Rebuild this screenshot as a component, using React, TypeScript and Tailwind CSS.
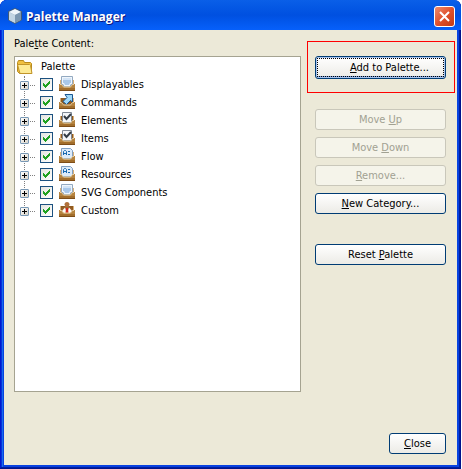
import React, { useState } from "react";

type IconKind = "tray" | "command" | "check" | "letter" | "custom";

const categories: { name: string; icon: IconKind }[] = [
  { name: "Displayables", icon: "tray" },
  { name: "Commands", icon: "command" },
  { name: "Elements", icon: "check" },
  { name: "Items", icon: "check" },
  { name: "Flow", icon: "letter" },
  { name: "Resources", icon: "letter" },
  { name: "SVG Components", icon: "tray" },
  { name: "Custom", icon: "custom" },
];

function CategoryIcon({ kind }: { kind: IconKind }) {
  return (
    <svg viewBox="0 0 16 16" className="size-4 shrink-0" aria-hidden="true">
      <path d="M1 4h14v5H1z" fill="#d8b07a" />
      <path d="M2 4h12v7H2z" fill="#8f5a20" />
      {kind === "tray" && (
        <>
          <path d="M2.500.5h11v8h-1.500l-1 2h-6l-1-2H2.500z" fill="#f0f6fc" stroke="#93a9c0" />
          <path d="M4 2h8v5h-1l-1 2H6L5 7H4z" fill="#a9c8ea" />
          <path d="M4 2h8v2H4z" fill="#d3e4f6" />
        </>
      )}
      {kind === "command" && (
        <path
          d="M6 .5h7.500V8L11.500 6.500 7.500 10.500 4 7.500l4-4z"
          fill="#9fd8f8"
          stroke="#1a5690"
        />
      )}
      {kind === "check" && (
        <>
          <path d="M3.500.5h9v10h-9z" fill="#f4f6f9" stroke="#7f8894" />
          <path d="M5 4l2.500 3L12 2" fill="none" stroke="#333c46" strokeWidth="2" />
        </>
      )}
      {kind === "letter" && (
        <>
          <path d="M2.500.5h9l2 2v8h-11z" fill="#dcebfa" stroke="#7f9fc4" />
          <path
            d="M4.500 7V3.500l1-1h1l1 1V7M4.500 5.500h3M9 3.500h2M9 6.500h2"
            fill="none"
            stroke="#1768b0"
          />
        </>
      )}
      {kind === "custom" && (
        <>
          <path d="M2 10c0-4 2-5 6-5s6 1 6 5z" fill="#9a6229" />
          <path d="M5.500 2.500a2.500 2.500 0 0 1 5 0L9.500 5h-3z" fill="#b0713a" />
          <path d="M3 9l3-3.500L8 11l2-5.500L13 9l-2 2H5z" fill="#fbfbfb" />
          <path d="M7 6h2l.5 5h-3z" fill="#d22a1c" />
        </>
      )}
      <path d="M0 8h2l2 3h8l2-3h2v7H0z" fill="#b5833f" />
      <path d="M1 8.500h1.500l2 2.500h7l2-2.500H15" fill="none" stroke="#ead2a4" />
      <path d="M0 12h16v3H0z" fill="#a26e2c" />
      <path d="M0 14.500h16" stroke="#7d4d18" />
    </svg>
  );
}

function CategoryRow({ name, icon }: { name: string; icon: IconKind }) {
  const [checked, setChecked] = useState(true);
  return (
    <li className="flex h-[18px] items-start">
      <button
        type="button"
        aria-label={`Expand ${name}`}
        className="relative mt-[5px] grid size-[9px] shrink-0 place-items-center rounded-[1px] border border-[#7898b5] bg-linear-to-br from-white to-[#d8d3c8]"
      >
        <svg viewBox="0 0 5 5" className="size-[5px]" aria-hidden="true">
          <path d="M0 2.500h5M2.500 0v5" stroke="#000" />
        </svg>
      </button>
      <span className="mt-[9px] ml-px w-[5px] border-t border-dotted border-[#808080]" />
      <label className="ml-[5px] flex items-start">
        <span className="relative mt-0.5 mr-1.5 size-[13px]">
          <input
            type="checkbox"
            checked={checked}
            onChange={(e) => setChecked(e.target.checked)}
            className="block size-[13px] appearance-none border border-[#1c5180] bg-linear-to-br from-[#e4e4df] to-white"
          />
          {checked && (
            <svg
              viewBox="0 0 13 13"
              className="pointer-events-none absolute inset-0 size-[13px]"
              shapeRendering="crispEdges"
              aria-hidden="true"
            >
              <path
                d="M3 5h1v3H3zM4 6h1v3H4zM5 7h1v3H5zM6 6h1v3H6zM7 5h1v3H7zM8 4h1v3H8zM9 3h1v3H9z"
                fill="#21a121"
              />
            </svg>
          )}
        </span>
        <CategoryIcon kind={icon} />
        <span className="ml-1.5 leading-[18px] whitespace-nowrap">{name}</span>
      </label>
    </li>
  );
}

function DialogButton({
  children,
  disabled = false,
  className = "",
}: {
  children: React.ReactNode;
  disabled?: boolean;
  className?: string;
}) {
  return (
    <button
      type="button"
      disabled={disabled}
      className={`h-[21px] rounded-[3px] border border-[#003c74] bg-linear-to-b from-white to-[#ecebe6] leading-4 whitespace-nowrap disabled:border-[#c9c7ba] disabled:bg-[#f5f4ea] disabled:bg-none disabled:text-[#a1a192] ${className}`}
    >
      {children}
    </button>
  );
}

export default function App() {
  return (
    <div className="mr-px flex min-h-screen flex-col rounded-t-[7px] bg-[#0842e0] font-['DejaVu_Sans_Condensed','Liberation_Sans',sans-serif] text-[11px] text-black shadow-[inset_-1px_-1px_#00138c,inset_1px_0_#0019cf,inset_-2px_-2px_#001ea0,inset_2px_0_#0831d9,inset_3px_0_#166aee]">
      <header className="flex h-[30px] shrink-0 items-center rounded-t-[7px] bg-linear-to-b from-[#0a5fe8] via-[#0050e0] to-[#0660fb] pt-0.5 pr-1.5 pl-[7px]">
        <svg viewBox="0 0 16 16" className="size-4" aria-hidden="true">
          <path d="M8 .5l6.500 3v8.500L8 15.500 1.500 12V3.500z" fill="#8fa7bd" stroke="#405a78" />
          <path d="M8 1l6 3-6 3-6-3z" fill="#eef5fa" />
          <path d="M2 4l6 3v8l-6-3z" fill="#c2d5e3" />
          <path d="M14 4L8 7v8l6-3z" fill="#7b97b0" />
        </svg>
        <h1 className="ml-[3px] grow pt-0.5 font-['Open_Sans','Noto_Sans',sans-serif] text-[12px] font-bold text-white [text-shadow:1px_1px_#0a1883]">
          Palette Manager
        </h1>
        <button
          type="button"
          aria-label="Close window"
          className="grid size-[21px] place-items-center rounded-[3px] border border-white bg-linear-to-br from-[#ec8a6c] via-[#e0512c] to-[#c33a12]"
        >
          <svg viewBox="0 0 11 11" className="size-[11px]" aria-hidden="true">
            <path d="M1 1l9 9M10 1l-9 9" stroke="#fff" strokeWidth="2" />
          </svg>
        </button>
      </header>

      <main className="mx-1 mb-1 flex grow flex-col bg-[#ece9d8] pr-0.5 pb-[11px] pl-[10px]">
        <div className="flex grow gap-1.5">
          <section className="flex grow flex-col pt-1.5">
            <h2 id="content-label" className="h-5 leading-4">
              Pale<u>t</u>te Content:
            </h2>
            <div className="h-[336px] border border-[#a5a391] bg-white px-[2px] py-px">
              <div className="flex h-[18px] items-center">
                <svg viewBox="0 0 16 16" className="size-4" aria-hidden="true">
                  <path d="M.5 12.500v-9l1-2h5l1 2h6l1 1v9l-1 1h-11z" fill="#f0c040" stroke="#b88a1c" />
                  <path d="M.5 5.500h12l1 1 1.500 8H3z" fill="#fdea94" stroke="#c2952a" />
                </svg>
                <span className="ml-2">Palette</span>
              </div>
              <ul aria-labelledby="content-label" className="relative pl-[3px]">
                <span className="absolute top-0 bottom-2 left-[7px] border-l border-dotted border-[#808080]" />
                {categories.map((c) => (
                  <CategoryRow key={c.name} name={c.name} icon={c.icon} />
                ))}
              </ul>
            </div>
          </section>

          <aside className="flex w-[148px] shrink-0 flex-col pt-[11px]">
            <div className="border border-[#ff0000] pt-3.5 pr-2 pb-[13px] pl-[7px]">
              <button
                type="button"
                className="h-[23px] w-full rounded-[3px] border border-[#003c74] bg-linear-to-b from-white to-[#ecebe6] p-px shadow-[inset_0_0_0_1px_#a9c4ee,inset_0_-2px_#7a9fd8]"
              >
                <span className="grid h-full place-items-center border border-dotted border-black pl-[18px] leading-4">
                  <span>
                    <u>A</u>dd to Palette...
                  </span>
                </span>
              </button>
            </div>
            <div className="mt-4 flex flex-col gap-[7px] pr-[9px] pl-2">
              <DialogButton disabled>
                Move <u>U</u>p
              </DialogButton>
              <DialogButton disabled>
                Move <u>D</u>own
              </DialogButton>
              <DialogButton disabled>
                <u>R</u>emove...
              </DialogButton>
              <DialogButton>
                <u>N</u>ew Category...
              </DialogButton>
              <DialogButton className="mt-[23px]">
                Reset <u>P</u>alette
              </DialogButton>
            </div>
          </aside>
        </div>
        <footer className="flex justify-end pr-[9px]">
          <DialogButton className="w-[57px]">
            <u>C</u>lose
          </DialogButton>
        </footer>
      </main>
    </div>
  );
}
